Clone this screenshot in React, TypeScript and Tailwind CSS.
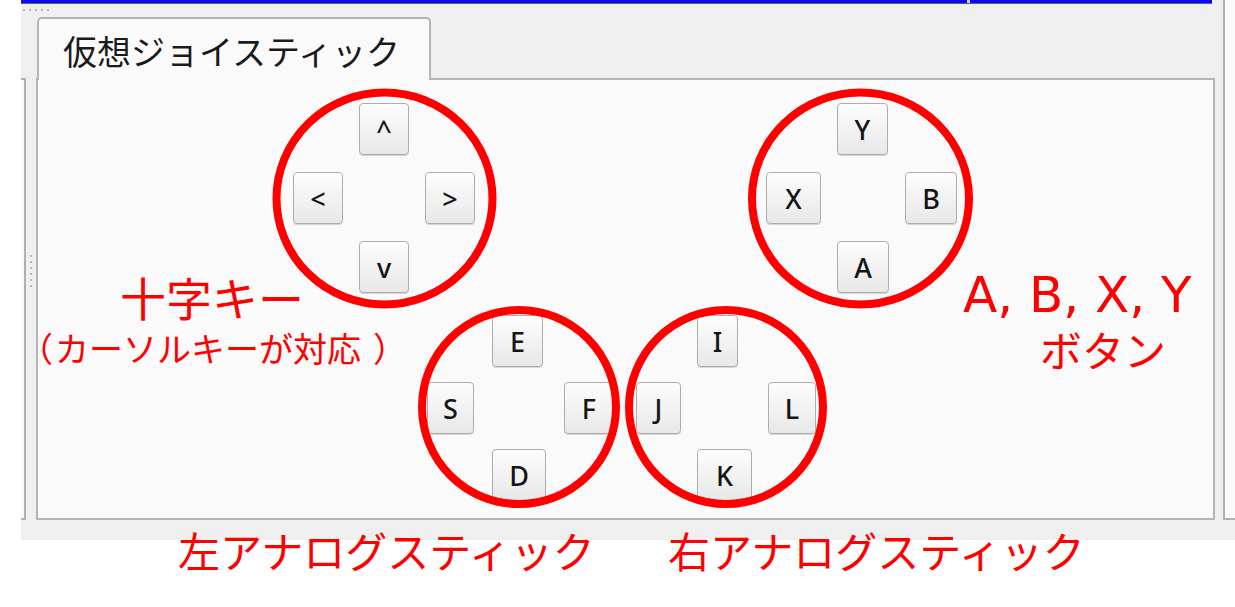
import React from 'react';

type Key = { label: string; w: string; cell: string };

const dpad: Key[] = [
	{ label: '^', w: 'w-[50px]', cell: 'col-start-2 row-start-1' },
	{ label: '<', w: 'w-[50px]', cell: 'col-start-1 row-start-2' },
	{ label: '>', w: 'w-[50px]', cell: 'col-start-3 row-start-2' },
	{ label: 'v', w: 'w-[50px]', cell: 'col-start-2 row-start-3' },
];

const abxy: Key[] = [
	{ label: 'Y', w: 'w-[51px]', cell: 'col-start-2 row-start-1' },
	{ label: 'X', w: 'w-[55px]', cell: 'col-start-1 row-start-2' },
	{ label: 'B', w: 'w-[52px]', cell: 'col-start-3 row-start-2' },
	{ label: 'A', w: 'w-[52px]', cell: 'col-start-2 row-start-3' },
];

const leftStick: Key[] = [
	{ label: 'E', w: 'w-[51px]', cell: 'col-start-2 row-start-1' },
	{ label: 'S', w: 'w-[47px]', cell: 'col-start-1 row-start-2' },
	{ label: 'F', w: 'w-[50px]', cell: 'col-start-3 row-start-2' },
	{ label: 'D', w: 'w-[54px]', cell: 'col-start-2 row-start-3' },
];

const rightStick: Key[] = [
	{ label: 'I', w: 'w-[41px]', cell: 'col-start-2 row-start-1' },
	{ label: 'J', w: 'w-[45px]', cell: 'col-start-1 row-start-2' },
	{ label: 'L', w: 'w-[48px]', cell: 'col-start-3 row-start-2' },
	{ label: 'K', w: 'w-[55px]', cell: 'col-start-2 row-start-3' },
];

function KeyButton({ k }: { k: Key }) {
	return (
		<button
			className={`${k.w} ${k.cell} flex h-[52px] items-center justify-center rounded-[4px] border border-[#adadad] bg-linear-to-b from-[#fdfdfd] to-[#e8e8e8] font-['Noto_Sans',sans-serif] text-[27px] font-medium leading-none text-[#151515] shadow-[0_1px_0_#d6d6d6]`}
		>
			{k.label}
		</button>
	);
}

function Cluster({ keys, gapX, gapY }: { keys: Key[]; gapX: string; gapY: string }) {
	return (
		<div className={`grid grid-cols-[auto_auto_auto] grid-rows-[52px_52px_52px] justify-items-start ${gapX} ${gapY}`}>
			{keys.map((k) => (
				<KeyButton key={k.label} k={k} />
			))}
		</div>
	);
}

export default function App() {
	return (
		<div className="relative h-[607px] w-[1235px] overflow-hidden bg-white font-['Noto_Sans_CJK_JP',sans-serif] [text-spacing-trim:space-all]">
			{/* window */}
			<div className="ml-[21px] flex h-[540px] bg-[#efefef]">
				<div className="flex w-[1194px] flex-col">
					<div className="flex h-[3px] w-[1191px] bg-[#0a0af2] shadow-[0_1px_0_#5a5a9a]">
						<div className="ml-[946px] h-[3px] w-[3px] bg-[#d8d0c0]" />
					</div>

					<div className="flex h-[14px] items-center gap-[4px] pl-[2px]">
						{[0, 1, 2, 3, 4].map((i) => (
							<span key={i} className="h-[2px] w-[2px] bg-[#b8b8b8]" />
						))}
					</div>

					<div className="flex h-[503px]">
						{/* left dock edge */}
						<div className="mt-[61px] w-[5px] border-t-2 border-r-2 border-b-2 border-[#b0b0b0] bg-[#fafafa]" />

						{/* splitter */}
						<div className="flex w-[10px] flex-col items-center justify-center gap-[4px] pt-[4px]">
							{[0, 1, 2, 3, 4, 5].map((i) => (
								<span key={i} className="h-[2px] w-[2px] bg-[#b8b8b8]" />
							))}
						</div>

						{/* tab widget */}
						<div className="flex w-[1179px] flex-col">
							<div className="relative z-10 -mb-[2px] flex h-[63px]">
								<div className="ml-[1px] flex w-[394px] items-center rounded-t-[5px] border-2 border-b-0 border-[#b4b4b4] bg-[#fafafa] pt-[2px] pl-[24px] text-[34px] leading-none text-[#1a1a1a]">
									仮想ジョイスティック
								</div>
							</div>

							<div className="flex-1 border-2 border-[#b4b4b4] bg-[#fafafa] pt-[23px]">
								<div className="flex pl-[255px]">
									<Cluster keys={dpad} gapX="gap-x-4" gapY="gap-y-[17px]" />
									<div className="ml-[291px]">
										<Cluster keys={abxy} gapX="gap-x-4" gapY="gap-y-[17px]" />
									</div>
								</div>

								<div className="mt-[22px] flex pl-[389px]">
									<Cluster keys={leftStick} gapX="gap-x-[18px]" gapY="gap-y-[15px]" />
									<div className="ml-[22px]">
										<Cluster keys={rightStick} gapX="gap-x-4" gapY="gap-y-[15px]" />
									</div>
								</div>
							</div>
						</div>
					</div>
				</div>

				{/* right dock edge */}
				<div className="ml-[8px] h-[520px] flex-1 border-b-2 border-l-2 border-[#b0b0b0] bg-[#fafafa]" />
			</div>

			{/* annotations */}
			<svg className="pointer-events-none absolute inset-0" width="1235" height="607">
				<g fill="none" stroke="#ff0000" strokeWidth="8">
					<ellipse cx="384.5" cy="198.5" rx="108" ry="106" />
					<ellipse cx="860.5" cy="198.5" rx="108.5" ry="106" />
					<circle cx="519" cy="407" r="97" />
					<circle cx="726" cy="407" r="97" />
				</g>
			</svg>

			<p className="absolute top-[273px] left-[120px] w-[184px] text-center text-[46px] leading-none text-[#ff0000]">十字キー</p>
			<p className="absolute top-[331px] left-[19px] flex text-[34px] leading-none text-[#ff0000]">
				<span>（</span>
				<span className="ml-[2px]">カーソルキーが対応</span>
				<span className="ml-[12px]">）</span>
			</p>

			<p className="absolute top-[270px] left-[963px] font-['DejaVu_Sans',sans-serif] text-[50px] leading-none text-[#ff0000]">A, B, X, Y</p>
			<p className="absolute top-[328px] left-[1040px] text-[42px] leading-none text-[#ff0000]">ボタン</p>

			<p className="absolute top-[529px] left-[178px] text-[42px] leading-none text-[#ff0000]">左アナログスティック</p>
			<p className="absolute top-[529px] left-[668px] text-[42px] leading-none text-[#ff0000]">右アナログスティック</p>
		</div>
	);
}
